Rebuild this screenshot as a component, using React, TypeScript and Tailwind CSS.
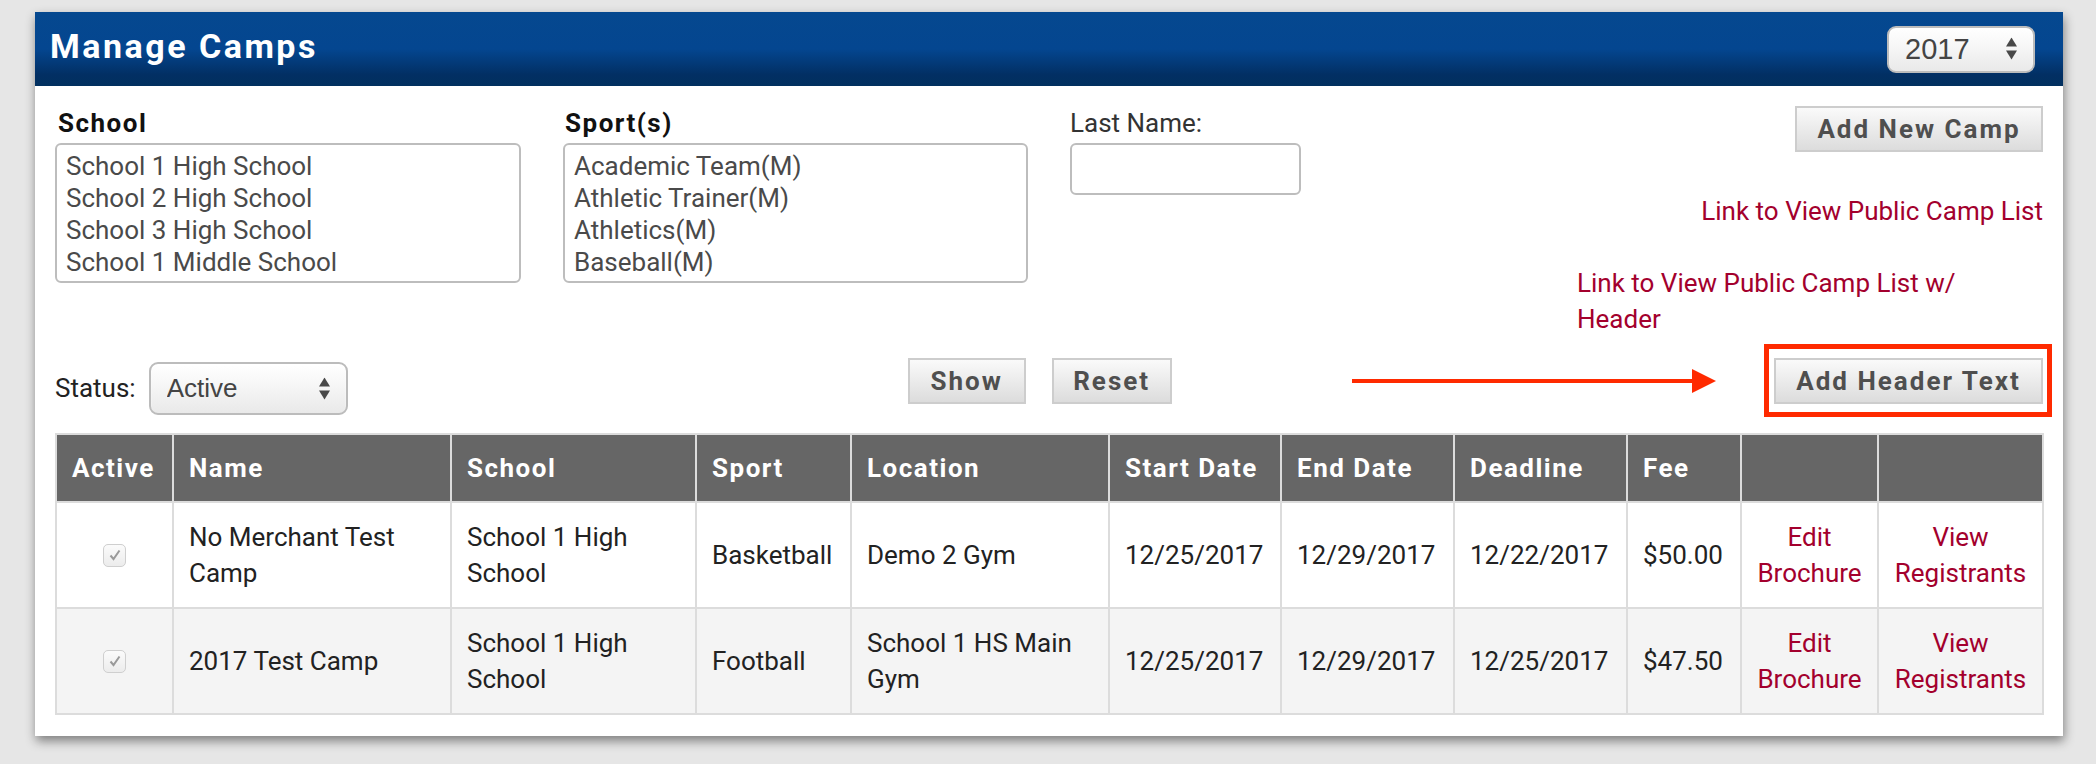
import React from "react"

const schools = ["School 1 High School", "School 2 High School", "School 3 High School", "School 1 Middle School"]
const sports = ["Academic Team(M)", "Athletic Trainer(M)", "Athletics(M)", "Baseball(M)"]

const columns = [
  { label: "Active", w: "w-[117px]" },
  { label: "Name", w: "w-[278px]" },
  { label: "School", w: "w-[245px]" },
  { label: "Sport", w: "w-[155px]" },
  { label: "Location", w: "w-[258px]" },
  { label: "Start Date", w: "w-[172px]" },
  { label: "End Date", w: "w-[173px]" },
  { label: "Deadline", w: "w-[173px]" },
  { label: "Fee", w: "w-[114px]" },
  { label: "", w: "w-[137px]" },
  { label: "", w: "w-[165px]" },
]

const camps = [
  {
    name: "No Merchant Test Camp",
    school: "School 1 High School",
    sport: "Basketball",
    location: "Demo 2 Gym",
    start: "12/25/2017",
    end: "12/29/2017",
    deadline: "12/22/2017",
    fee: "$50.00",
  },
  {
    name: "2017 Test Camp",
    school: "School 1 High School",
    sport: "Football",
    location: "School 1 HS Main Gym",
    start: "12/25/2017",
    end: "12/29/2017",
    deadline: "12/25/2017",
    fee: "$47.50",
  },
]

function Arrows() {
  return (
    <svg width="11" height="23" viewBox="0 0 11 23" className="fill-[#484848]">
      <path d="M5.5 0 L11 9 H0 Z" />
      <path d="M0 13 H11 L5.5 22 Z" />
    </svg>
  )
}

function MacSelect({ value, className, text }: { value: string; className: string; text: string }) {
  return (
    <div className={`relative ${className}`}>
      <select
        defaultValue={value}
        className={`h-full w-full appearance-none rounded-[9px] border-2 border-[#bcbcbc] bg-[linear-gradient(to_bottom,#ffffff_0%,#f6f6f6_45%,#e9e9e9_100%)] pl-[16px] font-['Liberation_Sans',Arial,sans-serif] text-[#444] shadow-[inset_0_2px_2px_rgba(255,255,255,0.9)] outline-none ${text}`}
      >
        <option>{value}</option>
      </select>
      <div className="pointer-events-none absolute right-[18px] top-1/2 -translate-y-1/2">
        <Arrows />
      </div>
    </div>
  )
}

function GrayButton({ label, className }: { label: string; className: string }) {
  return (
    <button
      type="button"
      className={`h-[46px] border-2 border-[#cdcdcd] bg-[linear-gradient(to_bottom,#fafafa,#dcdcdc)] text-center text-[26px] font-bold tracking-[2px] text-[#4f4f4f] ${className}`}
    >
      {label}
    </button>
  )
}

function CheckedBox() {
  return (
    <div className="mx-auto flex h-[23px] w-[23px] items-center justify-center rounded-[5px] border border-[#cfcfcf] bg-[linear-gradient(to_bottom,#fbfbfb,#ececec)]">
      <svg width="14" height="14" viewBox="0 0 14 14" fill="none" stroke="#9a9a9a" strokeWidth="2">
        <path d="M2.5 7.5 L5.5 11 L11.5 2.5" />
      </svg>
    </div>
  )
}

function ListBox({ items }: { items: string[] }) {
  return (
    <div className="h-[140px] w-full rounded-[6px] border-2 border-[#bdbdbd] bg-white px-[9px] pt-[5px]">
      {items.map((item) => (
        <div key={item} className="text-[26px] leading-[32px] text-[#4a4a4a]">
          {item}
        </div>
      ))}
    </div>
  )
}

export default function App() {
  return (
    <div className="min-h-screen bg-[#e6e6e6] pl-[35px] pr-[33px] pt-[12px] font-['Roboto',sans-serif]">
      <div className="bg-white shadow-[1px_5px_10px_rgba(0,0,0,0.45)]">
        <header className="flex h-[74px] items-center justify-between bg-[linear-gradient(to_bottom,#05488f_0%,#044690_50%,#022f63_85%,#01305f_100%)] pl-[15px] pr-[28px]">
          <h1 className="mb-[6px] text-[34px] font-bold tracking-[2.5px] text-white">Manage Camps</h1>
          <MacSelect value="2017" className="h-[47px] w-[148px]" text="text-[29px]" />
        </header>

        <div className="px-[20px] pb-[21px] pt-[20px]">
          <div className="flex justify-between">
            <div className="flex flex-col">
              <div className="mt-[1px] flex gap-[42px]">
                <div className="w-[466px]">
                  <div className="pl-[3px] text-[26px] font-bold leading-[32px] tracking-[1.5px] text-[#111]">School</div>
                  <div className="mt-[4px]">
                    <ListBox items={schools} />
                  </div>
                </div>
                <div className="w-[465px]">
                  <div className="pl-[2px] text-[26px] font-bold leading-[32px] tracking-[1.5px] text-[#111]">Sport(s)</div>
                  <div className="mt-[4px]">
                    <ListBox items={sports} />
                  </div>
                </div>
                <div className="w-[231px]">
                  <label htmlFor="lastName" className="block text-[26px] leading-[32px] text-[#333]">
                    Last Name:
                  </label>
                  <input
                    id="lastName"
                    className="mt-[4px] h-[52px] w-full rounded-[6px] border-2 border-[#bdbdbd] bg-white px-[8px] text-[26px] outline-none"
                  />
                </div>
              </div>

              <div className="mt-[75px] flex items-start">
                <div className="mt-[4px] flex items-center gap-[13px]">
                  <span className="text-[26px] text-[#222]">Status:</span>
                  <MacSelect value="Active" className="h-[53px] w-[199px]" text="text-[26px]" />
                </div>
                <GrayButton label="Show" className="ml-[560px] w-[118px]" />
                <GrayButton label="Reset" className="ml-[26px] w-[120px]" />
              </div>
            </div>

            <div className="flex w-[466px] flex-col">
              <GrayButton label="Add New Camp" className="self-end w-[248px]" />
              <a href="#" className="mt-[41px] self-end text-[26px] leading-[36px] text-[#a3002d]">
                Link to View Public Camp List
              </a>
              <a href="#" className="mt-[36px] text-[26px] leading-[36px] text-[#a3002d]">
                Link to View Public Camp List w/
                <br />
                Header
              </a>
              <div className="relative mt-[21px] self-end">
                <GrayButton label="Add Header Text" className="w-[269px]" />
                <div className="pointer-events-none absolute -bottom-[13px] -left-[10px] -right-[9px] -top-[14px] border-[5px] border-[#ff2a00]" />
                <svg
                  width="364"
                  height="24"
                  viewBox="0 0 364 24"
                  className="pointer-events-none absolute right-[calc(100%+58px)] top-[11px]"
                >
                  <rect x="0" y="10" width="342" height="4" fill="#ff2a00" />
                  <path d="M340 0 L364 12 L340 24 Z" fill="#ff2a00" />
                </svg>
              </div>
            </div>
          </div>

          <table className="mt-[18px] w-full table-fixed border-collapse border-2 border-[#dcdcdc] text-[26px] leading-[36px]">
            <colgroup>
              {columns.map((c, i) => (
                <col key={i} className={c.w} />
              ))}
            </colgroup>
            <thead>
              <tr className="bg-[#666666]">
                {columns.map((c, i) => (
                  <th
                    key={i}
                    className="border-2 border-[#dcdcdc] px-[15px] py-[15px] text-left font-bold tracking-[1.5px] text-white"
                  >
                    {c.label}
                  </th>
                ))}
              </tr>
            </thead>
            <tbody className="text-[#222]">
              {camps.map((camp, i) => (
                <tr key={camp.name} className={i % 2 === 1 ? "bg-[#f4f4f4]" : "bg-white"}>
                  <td className="border-2 border-[#dcdcdc] py-[16px]">
                    <CheckedBox />
                  </td>
                  <td className="border-2 border-[#dcdcdc] px-[15px] py-[16px]">{camp.name}</td>
                  <td className="border-2 border-[#dcdcdc] px-[15px] py-[16px]">{camp.school}</td>
                  <td className="border-2 border-[#dcdcdc] px-[15px] py-[16px]">{camp.sport}</td>
                  <td className="border-2 border-[#dcdcdc] px-[15px] py-[16px]">{camp.location}</td>
                  <td className="whitespace-nowrap border-2 border-[#dcdcdc] px-[15px] py-[16px]">{camp.start}</td>
                  <td className="whitespace-nowrap border-2 border-[#dcdcdc] px-[15px] py-[16px]">{camp.end}</td>
                  <td className="whitespace-nowrap border-2 border-[#dcdcdc] px-[15px] py-[16px]">{camp.deadline}</td>
                  <td className="whitespace-nowrap border-2 border-[#dcdcdc] px-[15px] py-[16px]">{camp.fee}</td>
                  <td className="border-2 border-[#dcdcdc] px-[10px] py-[16px] text-center">
                    <a href="#" className="text-[#a3002d]">
                      Edit
                      <br />
                      Brochure
                    </a>
                  </td>
                  <td className="border-2 border-[#dcdcdc] px-[10px] py-[16px] text-center">
                    <a href="#" className="text-[#a3002d]">
                      View
                      <br />
                      Registrants
                    </a>
                  </td>
                </tr>
              ))}
            </tbody>
          </table>
        </div>
      </div>
    </div>
  )
}
